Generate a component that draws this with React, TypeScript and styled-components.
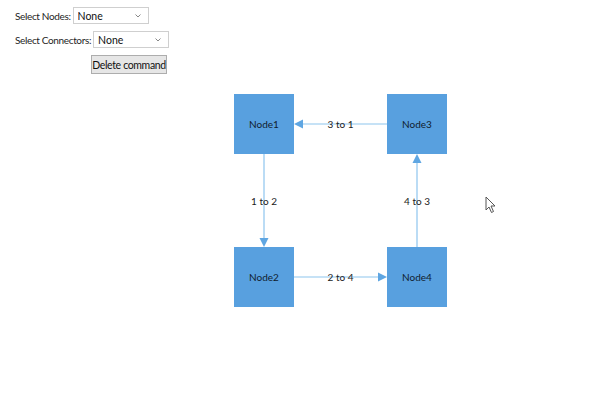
import React from 'react';
import styled, { createGlobalStyle } from 'styled-components';

const GlobalStyle = createGlobalStyle`
  html, body {
    margin: 0;
    padding: 0;
    background: #ffffff;
  }
  body {
    font-family: Lato, 'Open Sans', sans-serif;
    color: #1b1b1b;
  }
`;

type TNode = { id: string; x: number; y: number };

const NODES: TNode[] = [
  { id: 'Node1', x: 234, y: 14 },
  { id: 'Node3', x: 387, y: 14 },
  { id: 'Node2', x: 234, y: 167 },
  { id: 'Node4', x: 387, y: 167 },
];

type TConnector = { label: string; x1: number; y1: number; x2: number; y2: number };

const CONNECTORS: TConnector[] = [
  { label: '3 to 1', x1: 387, y1: 44, x2: 294, y2: 44 },
  { label: '1 to 2', x1: 264, y1: 74, x2: 264, y2: 167 },
  { label: '2 to 4', x1: 294, y1: 197, x2: 387, y2: 197 },
  { label: '4 to 3', x1: 417, y1: 167, x2: 417, y2: 74 },
];

const Arrow: React.FC<{ c: TConnector }> = ({ c }) => {
  const dx = Math.sign(c.x2 - c.x1);
  const dy = Math.sign(c.y2 - c.y1);
  const len = 9;
  const half = 4.5;
  const bx = c.x2 - dx * len;
  const by = c.y2 - dy * len;
  const pts = [
    `${c.x2},${c.y2}`,
    `${bx - dy * half},${by - dx * half}`,
    `${bx + dy * half},${by + dx * half}`,
  ].join(' ');
  return (
    <g>
      <line x1={c.x1} y1={c.y1} x2={bx} y2={by} stroke="#8ec5ee" strokeWidth={1.2} />
      <polygon points={pts} fill="#5fa6e2" />
    </g>
  );
};

const App: React.FC = () => {
  return (
    <Page>
      <GlobalStyle />
      <Toolbar>
        <Row>
          <Label>Select Nodes:</Label>
          <Select $width={76}>
            <option>None</option>
          </Select>
        </Row>
        <Row>
          <Label>Select Connectors:</Label>
          <Select $width={76}>
            <option>None</option>
          </Select>
        </Row>
        <ButtonRow>
          <Button>Delete command</Button>
        </ButtonRow>
      </Toolbar>
      <Canvas>
        <Lines width={600} height={319}>
          {CONNECTORS.map((c) => (
            <Arrow key={c.label} c={c} />
          ))}
        </Lines>
        {CONNECTORS.map((c) => (
          <EdgeLabel
            key={c.label}
            style={{ left: (c.x1 + c.x2) / 2, top: (c.y1 + c.y2) / 2 }}
          >
            {c.label}
          </EdgeLabel>
        ))}
        {NODES.map((n) => (
          <Node key={n.id} style={{ left: n.x, top: n.y }}>
            {n.id}
          </Node>
        ))}
        <Cursor width={12} height={18} viewBox="0 0 12 18" style={{ left: 485, top: 116 }}>
          <path
            d="M1 1 L1 14 L4 11 L6.5 16.5 L8.5 15.5 L6 10 L10 10 Z"
            fill="#ffffff"
            stroke="#555555"
            strokeWidth={1}
            strokeLinejoin="round"
          />
        </Cursor>
      </Canvas>
    </Page>
  );
};

export default App;

const Page = styled.div`
  width: 600px;
  height: 399px;
  overflow: hidden;
`;

const Toolbar = styled.div`
  display: flex;
  flex-direction: column;
  gap: 7px;
  padding: 7px 0 0 15px;
  height: 73px;
  box-sizing: border-box;
`;

const Row = styled.div`
  display: flex;
  align-items: center;
  gap: 2px;
  height: 17px;
`;

const Label = styled.span`
  font-size: 10px;
  letter-spacing: -0.35px;
  color: #1e1e1e;
`;

const Select = styled.select<{ $width: number }>`
  width: ${(p) => p.$width}px;
  height: 17px;
  font-family: Lato, 'Open Sans', sans-serif;
  font-size: 10.5px;
  color: #111;
  padding: 0 0 0 4px;
  border: 1px solid #cfcfcf;
  border-radius: 0;
  background: #fff;
  appearance: none;
  background-image: url("data:image/svg+xml;utf8,<svg xmlns='http://www.w3.org/2000/svg' width='6' height='4'><path d='M0.5 0.5 L3 3 L5.5 0.5' fill='none' stroke='%23888' stroke-width='1'/></svg>");
  background-repeat: no-repeat;
  background-position: right 7px center;
`;

const ButtonRow = styled.div`
  display: flex;
  padding-left: 76px;
`;

const Button = styled.button`
  height: 19px;
  width: 76px;
  padding: 0;
  white-space: nowrap;
  font-family: Lato, 'Open Sans', sans-serif;
  font-size: 10.5px;
  letter-spacing: -0.35px;
  color: #111;
  background: #e6e6e6;
  border: 1px solid #adadad;
  border-radius: 0;
`;

const Canvas = styled.div`
  position: relative;
  width: 600px;
  height: 319px;
  margin-top: 7px;
`;

const Lines = styled.svg`
  position: absolute;
  left: 0;
  top: 0;
`;

const Node = styled.div`
  position: absolute;
  width: 60px;
  height: 60px;
  background: #58a0df;
  display: flex;
  align-items: center;
  justify-content: center;
  font-size: 10px;
  color: #10202e;
`;

const EdgeLabel = styled.span`
  position: absolute;
  transform: translate(-50%, -50%);
  font-size: 10px;
  color: #1b1b1b;
  white-space: nowrap;
`;

const Cursor = styled.svg`
  position: absolute;
`;
